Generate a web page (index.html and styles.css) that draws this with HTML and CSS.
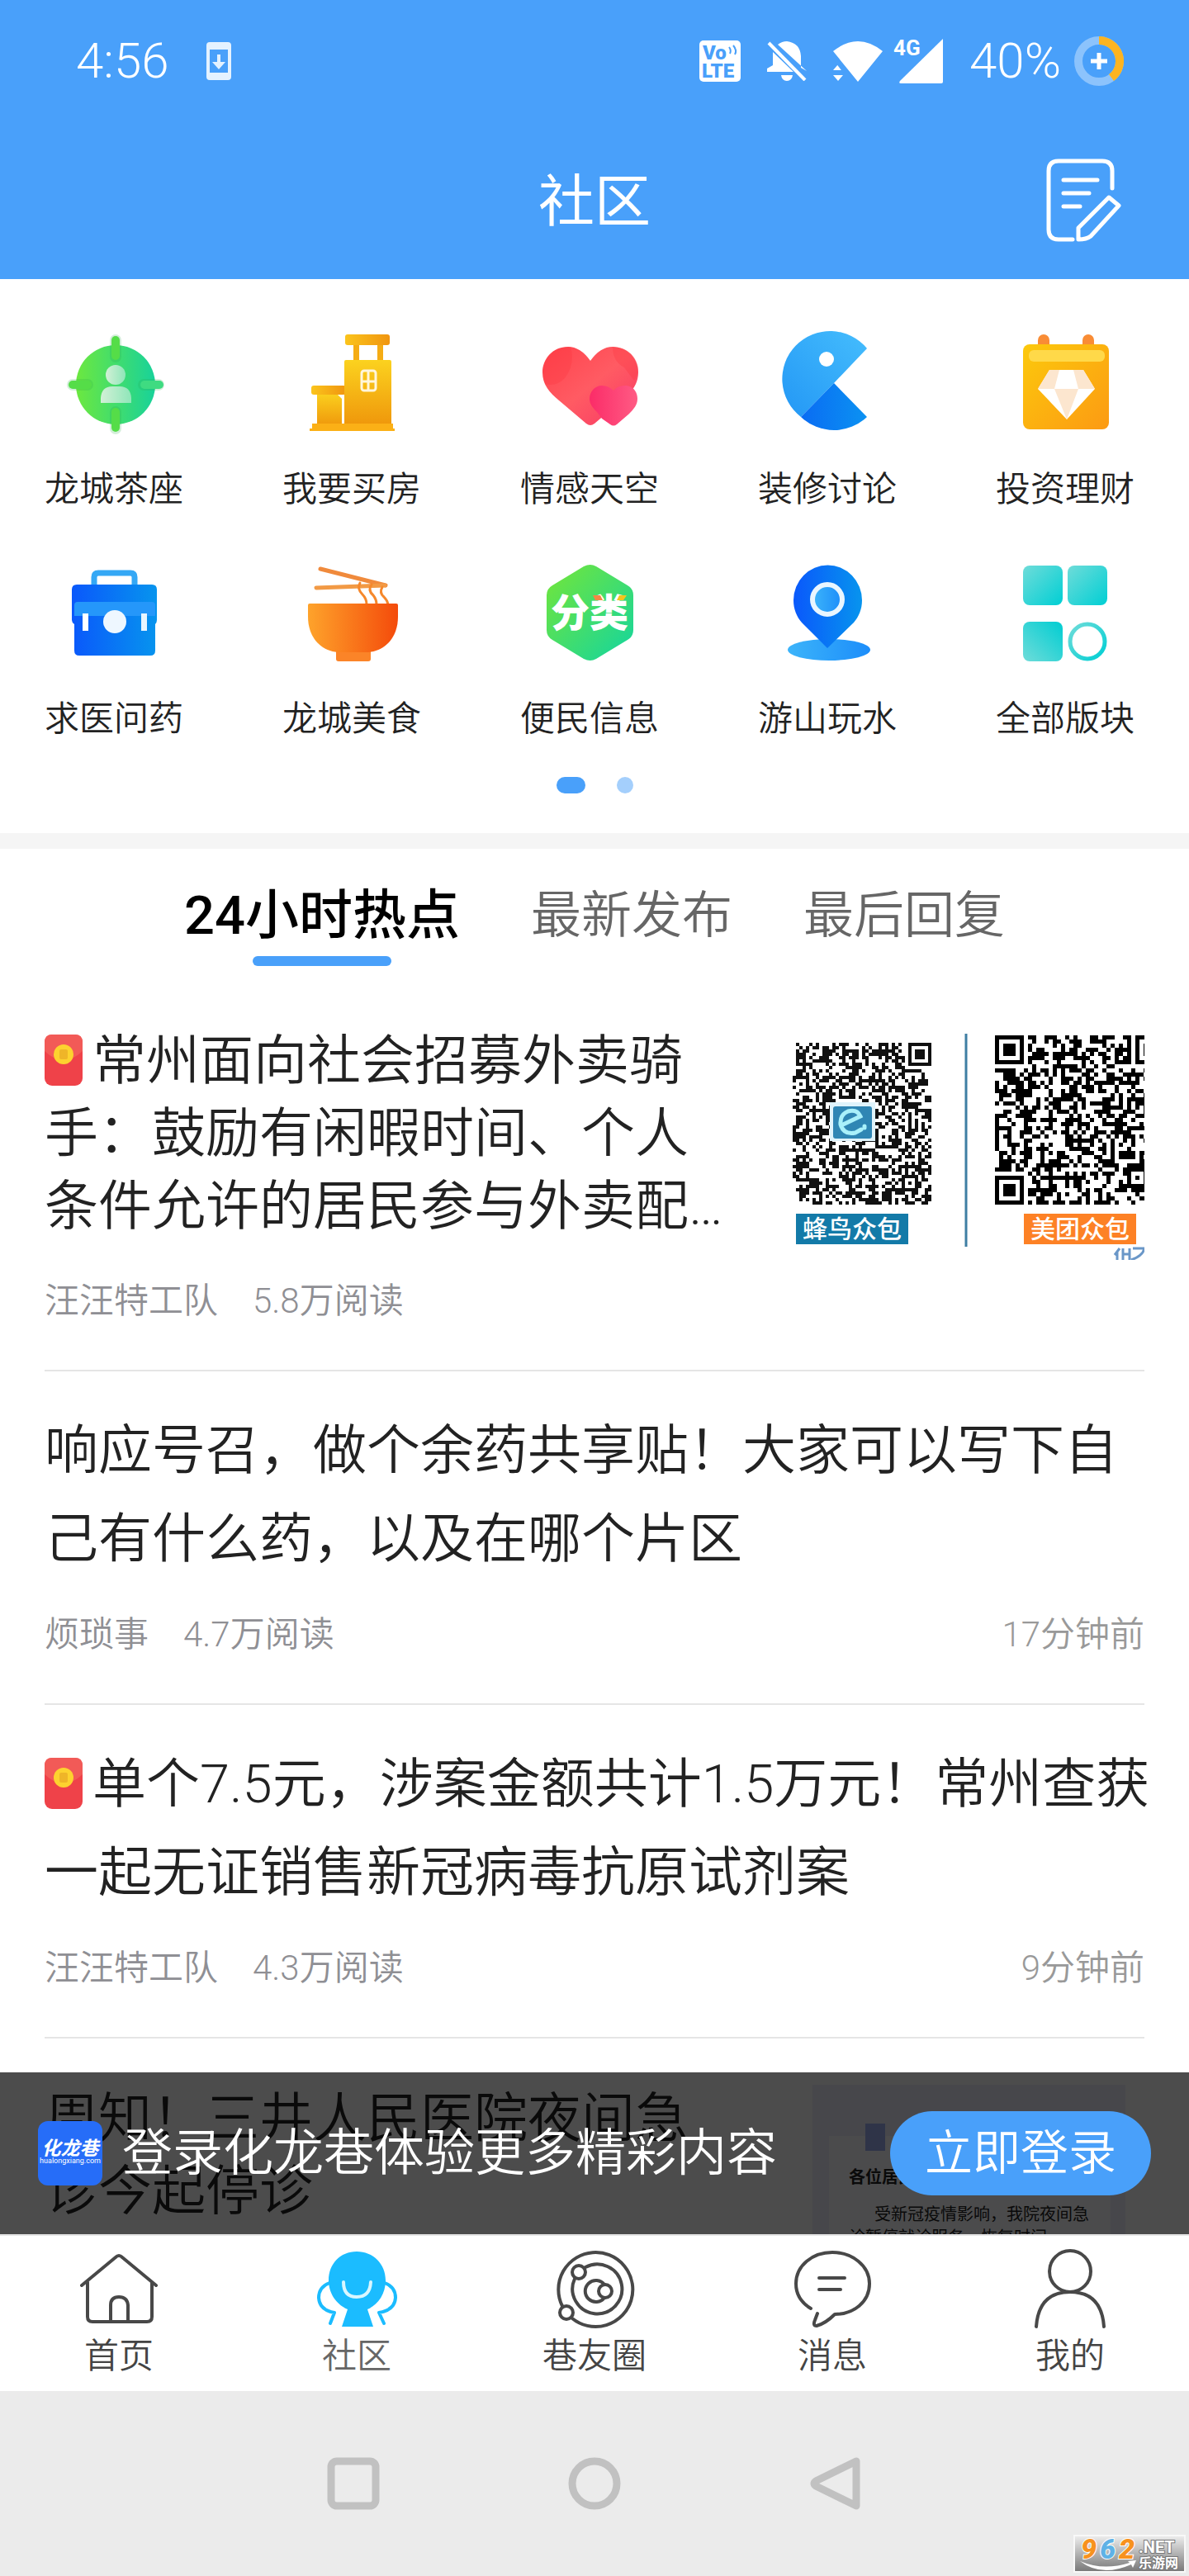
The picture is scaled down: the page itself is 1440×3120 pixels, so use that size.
FILE: index.html
```
<!DOCTYPE html>
<html lang="zh-CN">
<head>
    <meta charset="utf-8">
    <meta name="viewport" content="width=device-width, initial-scale=1">
    <title>社区</title>
    <link rel="stylesheet" href="styles.css">
    <script type="text/javascript" src="qrcode.js"></script>
</head>
<body>
<div class="app">
    <header class="header">
        <div class="status">
            <span class="status-text">4:56</span>
            <svg class="status-phone" width="30" height="46" viewBox="0 0 30 46"><path fill="#e4f2ff" fill-rule="evenodd" d="M4 0h22q4 0 4 4v38q0 4-4 4H4q-4 0-4-4V4q0-4 4-4zM4 9v28h22V9z"/><path fill="#e4f2ff" d="M13 15h4v9h6l-8 9-8-9h6z"/></svg>
            <div class="status-right">
                <svg width="50" height="50" viewBox="0 0 50 50"><rect width="50" height="50" rx="5" fill="#fff"/><g fill="#49a0fa" font-family="Roboto, sans-serif" font-weight="900"><text x="4" y="23" font-size="24">Vo</text><text x="3" y="45" font-size="24">LTE</text></g><path d="M36 8q3 4 1 8M41 6q5 6 2 11" fill="none" stroke="#49a0fa" stroke-width="2"/></svg>
                <svg width="48" height="48" viewBox="0 0 48 48"><path fill="#fff" d="M13 4Q18 0 24 0q16 2 17 18v14l7 4v0L13 4zM7 13l25 24H0v-4l7-4zM17 41h14q-1 7-7 7t-7-7z"/><path d="M2 2l44 45" stroke="#fff" stroke-width="4"/></svg>
                <div class="status-net">
                    <svg width="60" height="49" viewBox="0 0 60 49"><path fill="#fff" d="M0 12Q30-12 60 12L30 49zM0 35l6-7 6 7zM0 41h12l-6 7z"/><path d="M0 19l14 18" stroke="#49a0fa" stroke-width="4"/></svg>
                    <svg class="status-signal" width="57" height="54" viewBox="0 0 57 54"><path fill="#fff" d="M57 0v52q0 2-2 2H6q-3 0-1-3z"/><text x="-3" y="20" font-family="Roboto, sans-serif" font-size="26" font-weight="700" fill="#fff" stroke="#49a0fa" stroke-width="4" paint-order="stroke">4G</text></svg>
                </div>
                <div class="status-power">
                    <span class="status-text">40%</span>
                    <svg width="60" height="60" viewBox="0 0 60 60"><circle cx="30" cy="30" r="25" fill="none" stroke="#8cc3fc" stroke-width="10"/><path d="M30 5a25 25 0 0 1 15 45" fill="none" stroke="#fdb421" stroke-width="10"/><path d="M30 20v20M20 30h20" stroke="#fff" stroke-width="5"/></svg>
                </div>
            </div>
        </div>
        <div class="navbar">
            <h1 class="navbar-title">社区</h1>
            <button class="navbar-post" type="button" aria-label="发帖">
                <svg width="96" height="112" viewBox="0 0 96 112" fill="none" stroke="#fff" stroke-width="5" stroke-linecap="round" stroke-linejoin="round"><path d="M83 39V18Q83 6 71 6H18Q6 6 6 18v71q0 12 12 12h17"/><path d="M24 29h41M24 45h31M24 61h20M79 50l12 10-34 37q-5 4-15 4v-14z"/></svg>
            </button>
        </div>
    </header>

    <div class="content">
        <nav class="boards">
            <div class="boards-grid">
                <a class="board" href="#">
                    <svg class="board-icon" viewBox="0 0 120 120">
                        <defs><linearGradient id="g-green"><stop offset="0" stop-color="#6ce83f"/><stop offset="1" stop-color="#18d29a"/></linearGradient><linearGradient id="g-man"><stop offset="0" stop-color="#d2f0d6"/><stop offset="1" stop-color="#8fe6b9"/></linearGradient></defs>
                        <circle cx="62" cy="61" r="48" fill="url(#g-green)"/>
                        <path d="M62 7v20M62 94v20M10 61h18M96 61h18" stroke="#2aa844" stroke-opacity=".2" stroke-width="14" stroke-linecap="round"/>
                        <g fill="#55dd48"><rect x="57" y="2" width="10" height="29" rx="5"/><rect x="57" y="89" width="10" height="29" rx="5"/><rect x="5" y="56" width="28" height="10" rx="5"/></g><rect x="92" y="56" width="28" height="10" rx="5" fill="#3fdb81"/>
                        <circle cx="62" cy="49" r="12" fill="url(#g-man)"/><path d="M44 83v-6q1-14 14-14h9q13 0 14 14v6z" fill="url(#g-man)"/>
                    </svg>
                    <span>龙城茶座</span>
                </a>
                <a class="board" href="#">
                    <svg class="board-icon" viewBox="0 0 120 120">
                        <defs><linearGradient id="g-gold" x2="0" y2="1"><stop offset="0" stop-color="#fbd21f"/><stop offset="1" stop-color="#ef960b"/></linearGradient><linearGradient id="g-gold2"><stop offset="0" stop-color="#fbc41c"/><stop offset="1" stop-color="#f0950f"/></linearGradient></defs>
                        <rect x="62" y="10" width="7" height="24" fill="#f5ac14"/><rect x="91" y="10" width="7" height="24" fill="#f5ac14"/><rect x="52" width="54" height="13" rx="3" fill="url(#g-gold2)"/>
                        <path d="M18 70h22l8 8v34H18z" fill="url(#g-gold)"/><rect x="11" y="62" width="42" height="11" rx="3" fill="url(#g-gold2)"/>
                        <rect x="51" y="31" width="57" height="80" rx="2" fill="url(#g-gold)"/><path d="M12 108h98v6h2v3H9v-3h3z" fill="#fbb016"/>
                        <rect x="72" y="44" width="17" height="24" rx="3" fill="none" stroke="#fff6dc" stroke-width="3"/><path d="M80 45v22M73 57h15" stroke="#fff6dc" stroke-width="3"/>
                    </svg>
                    <span>我要买房</span>
                </a>
                <a class="board" href="#">
                    <svg class="board-icon" viewBox="0 0 120 120">
                        <defs><linearGradient id="g-red" x2="1" y2="1"><stop offset="0" stop-color="#ff424b"/><stop offset=".5" stop-color="#ff5b63"/><stop offset="1" stop-color="#f83866"/></linearGradient><linearGradient id="g-pink"><stop offset="0" stop-color="#fb2c68"/><stop offset="1" stop-color="#ff5b84"/></linearGradient></defs>
                        <path d="M61 32Q49 15 34 15C15 15 3 30 3 46c0 15 9 25 20 34l33 28q5 4 10 0l33-28c11-9 20-19 20-34 0-16-12-31-31-31Q73 15 61 32z" fill="url(#g-red)"/>
                        <path d="M37 15q6 21-7 38Q19 64 6 60 1 45 6 34 15 15 37 15zM88 15q0 18 14 25l12 16q7-10 4-20-7-20-30-21z" fill="#fb3640" opacity=".3"/>
                        <path d="M89 68Q83 62 75 62c-9 0-15 8-15 16 0 7 5 12 9 16l6 8 10 7q4 3 8 0l14-12c6-6 11-11 11-19 0-9-6-16-15-16q-9 0-14 6z" fill="url(#g-pink)"/>
                        <path d="M64 112l11-9 12 9z" fill="#fff"/>
                    </svg>
                    <span>情感天空</span>
                </a>
                <a class="board" href="#">
                    <svg class="board-icon" viewBox="0 0 120 120">
                        <defs><linearGradient id="g-sky" x1="1" y1="0" x2="0" y2="1"><stop offset="0" stop-color="#45bdfd"/><stop offset="1" stop-color="#2397f5"/></linearGradient><linearGradient id="g-blue"><stop offset="0" stop-color="#0a6cf3"/><stop offset="1" stop-color="#0b92f2"/></linearGradient></defs>
                        <path d="M68 59L108 17A58 58 0 1 0 28 100z" fill="url(#g-sky)"/><path d="M68 59l40 41a58 58 0 0 1-80 0z" fill="url(#g-blue)"/><circle cx="59" cy="30" r="9" fill="#fff"/>
                    </svg>
                    <span>装修讨论</span>
                </a>
                <a class="board" href="#">
                    <svg class="board-icon" viewBox="0 0 120 120">
                        <defs><linearGradient id="g-orange" x2="1" y2="1"><stop offset="0" stop-color="#fcc90c"/><stop offset="1" stop-color="#fc9a13"/></linearGradient></defs>
                        <rect x="27" width="14" height="24" rx="7" fill="#f98c35"/><rect x="81" width="14" height="24" rx="7" fill="#f98c35"/>
                        <rect x="9" y="12" width="104" height="103" rx="8" fill="url(#g-orange)"/><rect x="16" y="19" width="92" height="14" rx="6" fill="#ffd949"/>
                        <path d="M41 43h41l14 23-34 37-35-37z" fill="#fff"/><path d="M41 43h12l-6 23H27zM82 43H70l6 23h20zM47 66h29l-14 37z" fill="#fce6cf"/>
                    </svg>
                    <span>投资理财</span>
                </a>
                <a class="board" href="#">
                    <svg class="board-icon" viewBox="0 0 120 120">
                        <defs><linearGradient id="g-bag"><stop offset="0" stop-color="#0a58fb"/><stop offset="1" stop-color="#0794ee"/></linearGradient></defs>
                        <path d="M36 26V16q0-5 5-5h39q5 0 5 5v10" fill="none" stroke="#35a8f5" stroke-width="7"/>
                        <path d="M15 25h91q6 0 6 6v37q0 3-2 5v32q0 6-6 6H18q-6 0-6-6V73q-3-2-3-5V31q0-6 6-6z" fill="url(#g-bag)"/>
                        <path d="M16 46h90q4 0 4 4v13H12V50q0-4 4-4z" fill="#2597fa"/><rect x="22" y="60" width="7" height="21" fill="#fff"/><rect x="93" y="60" width="7" height="21" fill="#e8f5ff"/><circle cx="61" cy="70" r="14" fill="#eef7ff"/>
                    </svg>
                    <span>求医问药</span>
                </a>
                <a class="board" href="#">
                    <svg class="board-icon" viewBox="0 0 120 120">
                        <defs><linearGradient id="g-bowl"><stop offset="0" stop-color="#fea32b"/><stop offset="1" stop-color="#f44b0b"/></linearGradient></defs>
                        <g fill="none" stroke-linecap="round"><path d="M22 6l79 20" stroke="#f08a3c" stroke-width="5"/><path d="M17 29l83-3" stroke="#f29a45" stroke-width="5"/><path d="M70 23q-4 7 3 14 5 5 5 12M84 25q-5 7 2 13 4 5 4 11M97 28q-4 7 2 12 4 4 5 9" stroke="#f5882c" stroke-width="3"/></g>
                        <rect x="41" y="100" width="42" height="18" rx="3" fill="#fb8428"/><path d="M9 48h105q2 0 2 2v14c0 26-17 43-39 43H46C24 107 7 90 7 64V50q0-2 2-2z" fill="url(#g-bowl)"/>
                    </svg>
                    <span>龙城美食</span>
                </a>
                <a class="board" href="#">
                    <svg class="board-icon" viewBox="0 0 120 120">
                        <defs><linearGradient id="g-hex" x2="1" y2="1"><stop offset="0" stop-color="#75e637"/><stop offset="1" stop-color="#12d5a0"/></linearGradient></defs>
                        <path d="M53 3q8-4 15 0l38 23q7 4 7 12v42q0 8-7 12l-38 23q-7 4-15 0L15 92q-7-4-7-12V38q0-8 7-12z" fill="url(#g-hex)"/>
                        <text class="board-mark" x="60" y="76">分类</text>
                        <path d="M64 38h9l3 6h-9z" fill="#f78545"/><path d="M96 38h9l-4 6h-8z" fill="#f5c51c"/>
                    </svg>
                    <span>便民信息</span>
                </a>
                <a class="board" href="#">
                    <svg class="board-icon" viewBox="0 0 120 120">
                        <defs><linearGradient id="g-sea"><stop offset="0" stop-color="#3cb4fa"/><stop offset="1" stop-color="#1c8dfa"/></linearGradient></defs>
                        <ellipse cx="62" cy="104" rx="50" ry="13" fill="url(#g-sea)"/><path d="M60 102L29 71C23 64 19 55 19 44a41 42 0 0 1 83 0c0 11-4 20-10 27z" fill="url(#g-bag)"/><circle cx="60" cy="43" r="18" fill="url(#g-sea)" stroke="#e9f6ff" stroke-width="6"/>
                    </svg>
                    <span>游山玩水</span>
                </a>
                <a class="board" href="#">
                    <svg class="board-icon" viewBox="0 0 120 120">
                        <defs><linearGradient id="g-teal" x2="1" y2="1"><stop offset="0" stop-color="#6fdcd9"/><stop offset="1" stop-color="#00cfd4"/></linearGradient><linearGradient id="g-teal2" x1="1" y1="0" x2="0" y2="1"><stop offset="0" stop-color="#00cdd2"/><stop offset="1" stop-color="#6fdcd9"/></linearGradient></defs>
                        <rect x="9" y="2" width="48" height="48" rx="8" fill="url(#g-teal)"/><rect x="63" y="2" width="48" height="48" rx="8" fill="url(#g-teal)"/><rect x="9" y="70" width="48" height="48" rx="8" fill="url(#g-teal2)"/><circle cx="87" cy="94" r="21" fill="none" stroke="url(#g-teal)" stroke-width="5"/>
                    </svg>
                    <span>全部版块</span>
                </a>
            </div>
            <div class="dots"><i class="dot dot-on"></i><i class="dot"></i></div>
        </nav>

        <nav class="tabs">
            <a class="tab tab-on" href="#">24小时热点</a>
            <a class="tab" href="#">最新发布</a>
            <a class="tab" href="#">最后回复</a>
        </nav>

        <ul class="posts">
            <li class="post">
                <div class="post-row">
                    <a class="post-title post-title-side" href="#"><svg class="packet" viewBox="0 0 46 62"><rect width="46" height="62" rx="9" fill="#ef4249"/><path d="M0 20Q23 42 46 20V9q0-9-9-9H9Q0 0 0 9z" fill="#f25a57"/><circle cx="23" cy="24" r="12" fill="#fdd22f"/><rect x="18" y="18" width="10" height="12" rx="2" fill="#efb528"/></svg>常州面向社会招募外卖骑手：鼓励有闲暇时间、个人条件允许的居民参与外卖配…</a>
                    <svg class="thumb" viewBox="0 0 426 274">
                        <path id="qr-left" fill="#111"/>
                        <rect x="45" y="83" width="55" height="47" fill="#dff3fb"/><rect x="49" y="88" width="47" height="39" rx="3" fill="#2f86b4"/>
                        <path d="M61 110l21-10q-4-9-15-6-10 4-9 16 4 13 18 10l7-4M87 112v2" fill="none" stroke="#a9f0fa" stroke-width="5" stroke-linecap="round"/>
                        <path d="M210 0v258" stroke="#3f7ea3" stroke-width="3"/>
                        <path id="qr-right" fill="#000"/>
                        <rect x="4" y="218" width="136" height="37" fill="#137aa8"/><rect x="280" y="218" width="136" height="37" fill="#fd8125"/>
                        <text class="thumb-tag" x="72" y="247">蜂鸟众包</text><text class="thumb-tag" x="348" y="247">美团众包</text>
                        <path d="M396 260l-6 8M393 264v10M400 260v14M400 267h7M408 260v14M412 260h14q-2 9-16 14" fill="none" stroke="#6a97c8" stroke-width="3"/>
                    </svg>
                </div>
                <div class="post-meta post-meta-side"><span>汪汪特工队</span><span>5.8万阅读</span></div>
            </li>
            <li class="post">
                <a class="post-title" href="#">响应号召，做个余药共享贴！大家可以写下自己有什么药，以及在哪个片区</a>
                <div class="post-meta"><span>烦琐事</span><span>4.7万阅读</span><time>17分钟前</time></div>
            </li>
            <li class="post">
                <a class="post-title" href="#"><svg class="packet" viewBox="0 0 46 62"><rect width="46" height="62" rx="9" fill="#ef4249"/><path d="M0 20Q23 42 46 20V9q0-9-9-9H9Q0 0 0 9z" fill="#f25a57"/><circle cx="23" cy="24" r="12" fill="#fdd22f"/><rect x="18" y="18" width="10" height="12" rx="2" fill="#efb528"/></svg>单个7.5元，涉案金额共计1.5万元！常州查获一起无证销售新冠病毒抗原试剂案</a>
                <div class="post-meta"><span>汪汪特工队</span><span>4.3万阅读</span><time>9分钟前</time></div>
            </li>
            <li class="post post-notice">
                <div class="post-row">
                    <a class="post-title post-title-side" href="#">周知！三井人民医院夜间急诊今起停诊</a>
                    <svg class="thumb" viewBox="0 0 426 274">
                        <rect x="24" y="3" width="379" height="271" fill="#efeffb"/><rect x="44" y="65" width="341" height="209" fill="#fcfcff"/><rect x="88" y="50" width="24" height="33" fill="#9daef0"/>
                        <g class="notice"><text x="68" y="122" font-weight="700">各位居民：</text><text x="99" y="167" font-weight="400">受新冠疫情影响，我院夜间急</text><text x="68" y="195" font-weight="400">诊暂停就诊服务，恢复时间</text></g>
                    </svg>
                </div>
            </li>
        </ul>

        <div class="login-bar">
            <svg class="login-logo" viewBox="0 0 78 78"><rect width="78" height="78" rx="12" fill="#266df8"/><text x="39" y="41" font-size="23" font-weight="700" font-style="italic">化龙巷</text><text x="39" y="51" font-size="9" font-weight="400">hualongxiang.com</text></svg>
            <span class="login-text">登录化龙巷体验更多精彩内容</span>
            <button class="login-btn" type="button">立即登录</button>
        </div>
    </div>

    <nav class="tabbar">
        <a class="tabbar-item" href="#"><svg class="tabbar-icon" viewBox="0 0 100 100"><path d="M12 42v42q0 6 6 6h66q6 0 6-6V42M5 46L46 12q4-4 8 0l41 34M40 89V70q0-10 10-10t11 10v19"/></svg><span>首页</span></a>
        <a class="tabbar-item tabbar-on" href="#"><svg class="tabbar-icon" viewBox="0 0 100 100"><path d="M50 5c20 0 35 15 35 35 0 17-10 30-22 35l7 21H32l7-21C27 70 16 57 16 40 16 20 30 5 50 5z" fill="#1bbcff" stroke="none"/><path d="M17 43Q4 48 4 61q1 15 19 18l-5 13M84 43q13 5 13 18-1 15-20 18l6 13" stroke="#1bbcff"/><path d="M34 42q0 18 16 18t17-18" stroke="#d9f6ff"/></svg><span>社区</span></a>
        <a class="tabbar-item" href="#"><svg class="tabbar-icon" viewBox="0 0 100 100"><path d="M11 71A45 45 0 1 1 23 86M39 24a30 30 0 1 1-13 14"/><circle cx="31" cy="30" r="8"/><circle cx="16" cy="79" r="8"/><path d="M62 45a13 13 0 1 0 0 16"/><circle cx="63" cy="53" r="8"/></svg><span>巷友圈</span></a>
        <a class="tabbar-item" href="#"><svg class="tabbar-icon" viewBox="0 0 100 100"><path d="M24 74Q6 63 6 44C6 22 26 6 50 6s45 16 45 38-19 37-42 37Q42 92 31 95q-5 0-2-7l3-8M34 37h31M34 51h26"/></svg><span>消息</span></a>
        <a class="tabbar-item" href="#"><svg class="tabbar-icon" viewBox="0 0 100 100"><ellipse cx="50" cy="29" rx="25" ry="25"/><path d="M9 96q3-42 41-42t41 42"/></svg><span>我的</span></a>
    </nav>

    <footer class="sysbar">
        <button type="button" aria-label="最近任务"><svg width="64" height="64" viewBox="0 0 64 64"><rect x="5" y="5" width="54" height="54" rx="7"/></svg></button>
        <button type="button" aria-label="主屏幕"><svg width="64" height="64" viewBox="0 0 64 64"><circle cx="32" cy="32" r="27"/></svg></button>
        <button type="button" aria-label="返回"><svg width="64" height="64" viewBox="0 0 64 64"><path d="M57 5v54L8 35q-4-3 0-6z"/></svg></button>
        <svg class="site-mark" viewBox="0 0 136 46">
            <defs><linearGradient id="g-mark" x2="0" y2="1"><stop offset="0" stop-color="#eee"/><stop offset="1" stop-color="#777"/></linearGradient></defs>
            <rect x="1" y="1" width="134" height="44" fill="url(#g-mark)" stroke="#f8f8f8" stroke-width="2"/>
            <g font-family="Roboto, sans-serif" font-weight="900" font-style="italic" font-size="34" stroke="#fff" stroke-width="2" paint-order="stroke"><text x="9" y="29" fill="#f7921e">9</text><text x="32" y="29" fill="#5fb2e6">6</text><text x="55" y="29" fill="#f7921e">2</text></g>
            <path d="M8 32q26 20 62 4l2 4 4-9-10 1 2 2Q36 44 8 32z" fill="#fff"/>
            <g fill="#fff" stroke="#777" stroke-width="2" paint-order="stroke" font-weight="700"><text x="79" y="22" font-size="20" font-family="Roboto, sans-serif">.NET</text><text x="79" y="40" font-size="16" font-family="Noto Sans CJK SC, sans-serif">乐游网</text></g>
        </svg>
    </footer>
</div>
</body>
</html>
```

FILE: styles.css
```
*{
    margin: 0;
    padding: 0;
    box-sizing: border-box;
}

body
{
    font-family: Roboto, "Noto Sans CJK SC", sans-serif;
    font-weight: 350;
    color: #222222;
    background-color: #ffffff;
}

a
{
    color: inherit;
    text-decoration: none;
}

ul
{
    list-style: none;
}

button
{
    border: none;
    background: none;
    font: inherit;
    color: inherit;
}

svg
{
    display: block;
    flex: none;
}

.app
{
    display: flex;
    flex-direction: column;
    height: 100vh;
}

/* 顶部 */
.header
{
    background-color: #49a0fa;
    color: #ffffff;
}

.status
{
    display: flex;
    align-items: center;
    height: 148px;
    padding: 0 79px 0 92px;
}

.status-text
{
    font-size: 60px;
    font-weight: 300;
    line-height: 60px;
}

.status-phone
{
    margin-left: 46px;
}

.status-right
{
    display: flex;
    align-items: center;
    gap: 32px;
    margin-left: auto;
}

.status-net,
.status-power
{
    display: flex;
    align-items: center;
    gap: 16px;
}

.status-signal
{
    overflow: visible;
}

.navbar
{
    display: grid;
    grid-template-columns: 1fr auto 1fr;
    align-items: center;
    height: 190px;
    padding: 4px 80px 0;
}

.navbar-title
{
    grid-column: 2;
    font-size: 68px;
    font-weight: 400;
    line-height: 88px;
}

.navbar-post
{
    justify-self: end;
}

/* 中间滚动区 */
.content
{
    position: relative;
    flex: 1;
    min-height: 0;
    overflow: hidden;
}

.boards
{
    padding: 67px 0 48px;
    border-bottom: 19px solid #f5f5f5;
}

.boards-grid
{
    display: grid;
    grid-template-columns: repeat(5, 1fr);
    row-gap: 60px;
    margin: 0 6px 0 -6px;
}

.board
{
    display: flex;
    flex-direction: column;
    align-items: center;
    gap: 38px;
    font-size: 42px;
    line-height: 60px;
}

.board-icon
{
    width: 120px;
    height: 120px;
    overflow: visible;
}

.board-mark
{
    font-family: "Noto Sans CJK SC", sans-serif;
    font-size: 47px;
    font-weight: 900;
    fill: #ffffff;
    text-anchor: middle;
}

.dots
{
    display: flex;
    justify-content: center;
    gap: 38px;
    margin-top: 40px;
}

.dot
{
    width: 20px;
    height: 20px;
    border-radius: 10px;
    background-color: #a4cffc;
}

.dot-on
{
    width: 35px;
    background-color: #49a0fa;
}

.tabs
{
    display: flex;
    justify-content: center;
    gap: 86px;
    padding: 43px 0 28px;
}

.tab
{
    font-size: 61px;
    line-height: 76px;
    color: #666666;
}

.tab-on
{
    font-size: 65px;
    font-weight: 500;
    color: #000000;
}

.tab-on::after
{
    content: "";
    display: block;
    width: 168px;
    height: 12px;
    margin: 11px auto 0;
    border-radius: 6px;
    background-color: #49a0fa;
}

/* 帖子列表 */
.posts
{
    padding: 0 54px;
}

.post
{
    padding: 43px 0 53px;
    border-bottom: 2px solid #e5e5e5;
}

.post-row
{
    display: flex;
    justify-content: space-between;
    gap: 70px;
}

.post-title
{
    display: block;
    flex: 1;
    margin-right: -16px;
    font-size: 65px;
    line-height: 107px;
}

.post-title-side
{
    margin-right: 0;
    line-height: 88px;
}

.thumb
{
    width: 426px;
    height: 274px;
    margin-top: 11px;
}

.thumb-tag
{
    font-family: "Noto Sans CJK SC", sans-serif;
    font-size: 30px;
    font-weight: 500;
    fill: #ffffff;
    text-anchor: middle;
}

.post-notice
{
    padding-top: 53px;
}

.post-notice .thumb
{
    margin-top: 0;
}

.notice
{
    font-family: "Noto Sans CJK SC", sans-serif;
    font-size: 20px;
    fill: #222222;
}

.packet
{
    display: inline-block;
    width: 46px;
    height: 62px;
    margin-right: 12px;
    vertical-align: -8px;
}

.post-meta
{
    display: flex;
    gap: 42px;
    margin-top: 32px;
    font-size: 42px;
    line-height: 60px;
    color: #8f8f94;
}

.post-meta-side
{
    margin-top: 20px;
}

.post-meta time
{
    margin-left: auto;
    color: #999999;
}

/* 登录提示条 */
.login-bar
{
    position: absolute;
    left: 0;
    right: 0;
    bottom: 0;
    display: flex;
    align-items: center;
    height: 196px;
    padding: 0 46px;
    background-color: rgba(0, 0, 0, 0.7);
    color: #ffffff;
}

.login-logo
{
    width: 78px;
    height: 78px;
    fill: #ffffff;
    text-anchor: middle;
}

.login-text
{
    margin-left: 24px;
    font-size: 61px;
    line-height: 88px;
}

.login-btn
{
    width: 316px;
    height: 102px;
    margin-left: auto;
    border-radius: 51px;
    background-color: #49a0fa;
    font-size: 58px;
    line-height: 88px;
}

/* 底部导航 */
.tabbar
{
    display: flex;
    height: 190px;
    padding-top: 14px;
    border-top: 2px solid #e5e5e5;
}

.tabbar-item
{
    flex: 1;
    display: flex;
    flex-direction: column;
    align-items: center;
    gap: 2px;
    font-size: 42px;
    line-height: 60px;
    color: #444444;
}

.tabbar-on
{
    color: #666666;
}

.tabbar-icon
{
    width: 100px;
    height: 100px;
    fill: none;
    stroke: #484848;
    stroke-width: 4;
    stroke-linecap: round;
    stroke-linejoin: round;
}

.sysbar
{
    position: relative;
    display: flex;
    justify-content: center;
    align-items: center;
    gap: 228px;
    height: 224px;
    background-color: #ebebeb;
}

.sysbar button svg
{
    fill: none;
    stroke: #c1c1c1;
    stroke-width: 9;
    stroke-linejoin: round;
}

.site-mark
{
    position: absolute;
    right: 4px;
    bottom: 4px;
    width: 136px;
    height: 46px;
}
```

FILE: qrcode.js
```
function $(id)
{
    return document.getElementById(id);
}

//画二维码: n为每边格数, size为格宽, (x0,y0)为左上角
function drawQr(path, n, size, x0, y0, seed)
{
    function random()
    {
        seed = (seed * 16807) % 2147483647;
        return seed / 2147483647;
    }
    //定位图案
    function finder(x, y)
    {
        var d = Math.max(Math.abs(x - 3), Math.abs(y - 3));
        return d == 3 || d < 2;
    }
    function cell(x, y)
    {
        var on = random() < 0.52;
        var fx = x > n - 9 ? x - (n - 7) : x;
        var fy = y > n - 9 ? y - (n - 7) : y;
        if (fx < 8 && fy < 8 && !(x > n - 9 && y > n - 9))
        {
            return fx >= 0 && fy >= 0 && fx < 7 && fy < 7 && finder(fx, fy);
        }
        //校正图案
        var a = Math.max(Math.abs(x - (n - 7)), Math.abs(y - (n - 7)));
        if (a < 3)
        {
            return a != 1;
        }
        return on;
    }
    var d = '';
    for (var y = 0; y < n; y++)
    {
        for (var x = 0; x < n; x++)
        {
            if (cell(x, y))
            {
                d += 'M' + (x0 + x * size) + ' ' + (y0 + y * size) + 'h' + size + 'v' + size + 'h-' + size + 'z';
            }
        }
    }
    path.setAttribute('d', d);
}

window.onload = function()
{
    drawQr($('qr-left'), 49, 4, -28, 11, 2023);
    drawQr($('qr-right'), 41, 5, 245, 2, 962);
};
```
